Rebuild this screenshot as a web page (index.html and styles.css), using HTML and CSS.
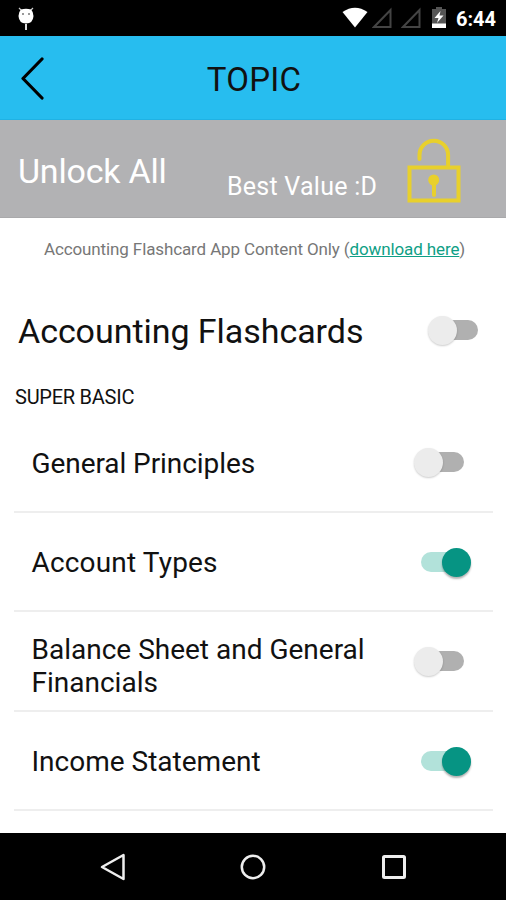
FILE: index.html
```html
<!DOCTYPE html>
<html lang="en">
<head>
<meta charset="utf-8">
<title>Topic</title>
<link rel="stylesheet" href="styles.css">
</head>
<body>
<div class="phone">
  <div class="status">
    <svg class="droid" width="16" height="24" viewBox="0 0 16 24"><path d="M1 1l3 3M15 1l-3 3" stroke="#ccc" stroke-width="1.2"/><path d="M3 2.500Q8 1 13 2.500Q15.500 5 15.500 9Q15 16.500 8 16.500T.500 9Q.500 5 3 2.500Z" fill="#fff"/><circle cx="5" cy="7" r="1" fill="#777"/><circle cx="11" cy="7" r="1" fill="#777"/><path d="M8 17v6" stroke="#ddd" stroke-width="2"/></svg>
    <div class="status-right">
      <svg width="26" height="22" viewBox="0 0 26 22"><path d="M.500 5Q13-3.500 25.500 5L13 20.500Z" fill="#fff"/></svg>
      <svg width="20" height="22" viewBox="0 0 20 22"><path d="M18.500 3V20H2Z" fill="none" stroke="#444" stroke-width="2"/></svg>
      <svg width="20" height="22" viewBox="0 0 20 22"><path d="M18.500 3V20H2Z" fill="none" stroke="#444" stroke-width="2"/></svg>
      <svg width="14" height="22" viewBox="0 0 14 22"><path d="M4 0h6v2h4v15H0V2h4Z" fill="#555"/><path d="M8.500 4L2.500 11h4l-1.500 5 6.500-7.500h-4Z" fill="#fff"/><path d="M0 16.500h14V21H0Z" fill="#fff"/></svg>
      <span class="time">6:44</span>
    </div>
  </div>
  <header class="header">
    <svg class="back" width="26" height="44" viewBox="0 0 26 44"><path d="M22 2L3 21.500L22 41" fill="none" stroke="#000" stroke-width="3.200" stroke-linecap="round" stroke-linejoin="round"/></svg>
    <h1>TOPIC</h1>
  </header>
  <section class="unlock">
    <span class="unlock-title">Unlock All</span>
    <span class="best">Best Value :D</span>
    <svg class="lock" width="54" height="66" viewBox="0 0 54 66"><g fill="none" stroke="#e8d02c" stroke-width="4"><path d="M12.500 21V17a14.300 14.300 0 0 1 28.600 0V28" stroke-linecap="round"/><path d="M2.500 29.500H51.500V62.500H2.500Z"/></g><circle cx="26.700" cy="42" r="5.500" fill="#e8d02c"/><path d="M27 43v14" stroke="#e8d02c" stroke-width="4" stroke-linecap="round"/></svg>
  </section>
  <p class="note">Accounting Flashcard App Content Only (<a>download here</a>)</p>
  <div class="group"><span class="group-title">Accounting Flashcards</span><i class="switch"></i></div>
  <h2>SUPER BASIC</h2>
  <ul class="topics">
    <li><span class="t1">General Principles</span><i class="switch"></i></li>
    <li><span class="t2">Account Types</span><i class="switch on"></i></li>
    <li class="double"><span class="t3">Balance Sheet and General Financials</span><i class="switch"></i></li>
    <li><span class="t4">Income Statement</span><i class="switch on"></i></li>
  </ul>
  <nav class="nav">
    <svg width="26" height="30" viewBox="0 0 26 30"><path d="M23.500 3V27L2 15Z" fill="none" stroke="#eee" stroke-width="2.500" stroke-linejoin="round"/></svg>
    <svg width="26" height="26" viewBox="0 0 26 26"><circle cx="13" cy="13" r="11.200" fill="none" stroke="#eee" stroke-width="2.500"/></svg>
    <svg width="26" height="26" viewBox="0 0 26 26"><rect x="2.500" y="2.500" width="21" height="21" rx="1" fill="none" stroke="#eee" stroke-width="3"/></svg>
  </nav>
</div>
</body>
</html>
```

FILE: styles.css
```css
* { box-sizing: border-box; }
body { margin: 0; font-family: Roboto, "Liberation Sans", sans-serif; color: #111; background: #fff; }
svg { display: block; flex: none; }
.phone { width: 506px; height: 900px; display: flex; flex-direction: column; overflow: hidden; }
.status { height: 36px; flex: none; background: #000; display: flex; justify-content: space-between; padding: 7px 10px 0 18px; }
.status-right { display: flex; }
.status-right svg:nth-child(2) { margin-left: 4px; }
.status-right svg:nth-child(3) { margin-left: 9px; }
.status-right svg:nth-child(4) { margin-left: 11px; }
.time { width: 40px; margin-left: 10px; color: #fff; font-size: 20px; line-height: 24px; font-weight: 700; white-space: nowrap; }
.header { height: 84px; flex: none; background: #27bdef; border-bottom: 1px solid #20b2e4; display: grid; grid-template-columns: 70px 1fr 70px; align-items: center; }
.back { margin: 2px 0 0 20px; }
h1 { margin: 5px 0 0 2px; text-align: center; font-size: 33px; line-height: 40px; font-weight: 400; letter-spacing: .3px; }
.unlock { height: 98px; flex: none; background: #b2b2b4; display: flex; color: #fff; padding-left: 18px; white-space: nowrap; border-bottom: 1px solid #a9a9ab; }
.unlock-title { width: 209px; font-size: 34px; line-height: 40px; margin-top: 31px; letter-spacing: -.2px; }
.best { width: 180px; font-size: 25px; line-height: 30px; margin-top: 52px; letter-spacing: .25px; }
.lock { margin-top: 18px; }
.note { margin: 19px 0 0 44px; font-size: 17px; line-height: 24px; letter-spacing: -.12px; color: #777; white-space: nowrap; }
.note a { color: #0f9f86; text-decoration: underline; }
.group { height: 80px; margin-top: 29px; padding: 0 28px 0 18px; display: flex; align-items: center; justify-content: space-between; white-space: nowrap; }
.group-title { font-size: 34px; letter-spacing: -.05px; padding-top: 1px; }
h2 { margin: 15px 0 0 15px; font-size: 20px; line-height: 24px; font-weight: 400; letter-spacing: -.25px; }
.topics { list-style: none; margin: 4px 13px 0 14px; padding: 0; }
.topics li { height: 99.500px; border-bottom: 2px solid #eee; padding: 0 29px 0 18px; display: flex; align-items: center; justify-content: space-between; }
.topics li:has(.on) { padding-right: 22px; }
.topics span { font-size: 28px; line-height: 33px; width: 345px; padding-top: 3px; margin-left: -.5px; }
.topics .t1 { letter-spacing: -.07px; }
.topics .t2 { letter-spacing: .17px; }
.topics .double span { padding-top: 10px; }
.topics .switch { margin-top: 2px; }
.switch { width: 50px; height: 29px; flex: none; display: flex; align-items: center; position: relative; }
.switch::before { content: ""; position: absolute; left: 8px; right: 0; top: 4px; height: 20px; border-radius: 10px; background: #b0b0b0; }
.switch::after { content: ""; position: relative; width: 29px; height: 29px; border-radius: 50%; background: #ececec; box-shadow: 0 1px 2px rgba(0,0,0,.2); }
.switch.on { justify-content: flex-end; }
.switch.on::before { left: 0; right: 8px; background: #b2e2da; }
.switch.on::after { background: #069483; box-shadow: 0 2px 2px rgba(0,0,0,.3); }
.nav { height: 67px; flex: none; margin-top: auto; background: #000; display: grid; grid-template-columns: repeat(3, 140.500px); justify-content: center; justify-items: center; align-items: center; }
```
